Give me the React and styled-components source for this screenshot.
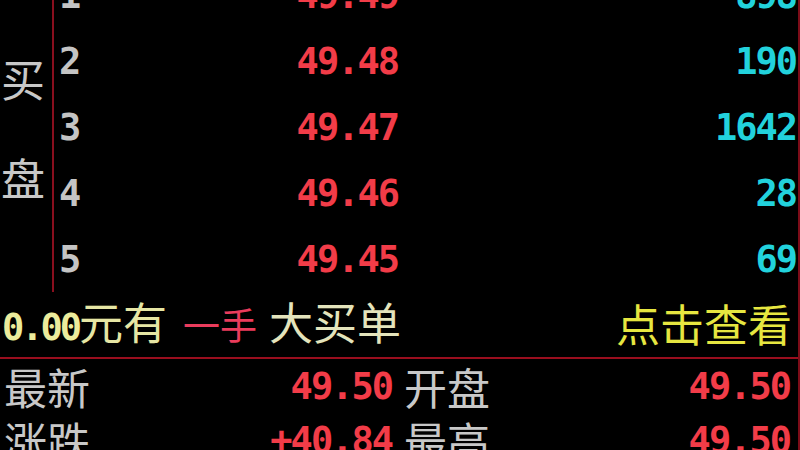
import React from 'react'
import styled, { createGlobalStyle } from 'styled-components'

const bids = [
	{ level: 1, price: '49.49', volume: '898' },
	{ level: 2, price: '49.48', volume: '190' },
	{ level: 3, price: '49.47', volume: '1642' },
	{ level: 4, price: '49.46', volume: '28' },
	{ level: 5, price: '49.45', volume: '69' },
]

const stats = [
	[
		{ label: '最新', value: '49.50' },
		{ label: '开盘', value: '49.50' },
	],
	[
		{ label: '涨跌', value: '+40.84' },
		{ label: '最高', value: '49.50' },
	],
]

const GlobalStyle = createGlobalStyle`
	html, body {
		margin: 0;
		padding: 0;
		background: #000;
	}
	* {
		box-sizing: border-box;
	}
`

const Screen = styled.div`
	width: 800px;
	height: 450px;
	overflow: hidden;
	background: #000;
	border-right: 2px solid #7c0c18;
	font-family: 'Noto Sans CJK SC', sans-serif;
	display: flex;
	flex-direction: column;
`

const Book = styled.div`
	display: flex;
	height: 330px;
	margin-top: -38px;
	flex-shrink: 0;
`

const SideLabel = styled.div`
	width: 54px;
	border-right: 2px solid #8a0f1e;
	display: flex;
	flex-direction: column;
	justify-content: center;
	align-items: flex-start;
	gap: 55px;
	padding-left: 1px;
	color: #c8c8c8;
	font-size: 44px;
	line-height: 44px;
`

const Levels = styled.div`
	flex: 1;
	display: flex;
	flex-direction: column;
`

const Level = styled.div`
	height: 66px;
	display: flex;
	align-items: center;
	font-family: 'DejaVu Sans Mono', monospace;
	font-weight: bold;
	font-size: 37px;
	letter-spacing: -2px;
`

const Index = styled.span`
	width: 40px;
	padding-left: 5px;
	color: #c4c4c4;
`

const Price = styled.span`
	width: 304px;
	text-align: right;
	color: #f23c48;
`

const Volume = styled.span`
	flex: 1;
	text-align: right;
	padding-right: 2px;
	color: #22d2dc;
`

const Banner = styled.div`
	height: 67px;
	flex-shrink: 0;
	border-bottom: 2px solid #9a0e1e;
	display: flex;
	align-items: center;
	justify-content: space-between;
	padding: 0 6px 4px 2px;
	line-height: 1;
`

const BannerText = styled.div`
	display: flex;
	align-items: baseline;
`

const Piece = styled.span`
	color: ${props => props.color};
	margin-left: ${props => props.gap || 0}px;
	font-size: ${props => props.size || 44}px;
`

const Amount = styled.span`
	color: #ecec9c;
	font-family: 'DejaVu Sans Mono', monospace;
	font-weight: bold;
	font-size: 37px;
	letter-spacing: -3px;
`

const Stats = styled.div`
	display: flex;
	flex-direction: column;
`

const StatRow = styled.div`
	display: grid;
	grid-template-columns: 400px 1fr;
	height: 54px;
	align-items: center;
`

const Stat = styled.div`
	display: flex;
	justify-content: space-between;
	align-items: center;
	padding: 0 8px 0 4px;
`

const StatLabel = styled.span`
	color: #c8c8c8;
	font-size: 43px;
	line-height: 1;
`

const StatValue = styled.span`
	color: #f23c48;
	font-family: 'DejaVu Sans Mono', monospace;
	font-weight: bold;
	font-size: 37px;
	letter-spacing: -2px;
`

const App = () => (
	<Screen>
		<GlobalStyle />
		<Book>
			<SideLabel>
				<span>买</span>
				<span>盘</span>
			</SideLabel>
			<Levels>
				{bids.map(entry => (
					<Level key={entry.level}>
						<Index>{entry.level}</Index>
						<Price>{entry.price}</Price>
						<Volume>{entry.volume}</Volume>
					</Level>
				))}
			</Levels>
		</Book>
		<Banner>
			<BannerText>
				<Amount>0.00</Amount>
				<Piece color="#e6e6a4">元有</Piece>
				<Piece color="#ea3c5c" size={37} gap={16}>一手</Piece>
				<Piece color="#e4e4bc" gap={12}>大买单</Piece>
			</BannerText>
			<Piece color="#e6e640">点击查看</Piece>
		</Banner>
		<Stats>
			{stats.map((row, i) => (
				<StatRow key={i}>
					{row.map(entry => (
						<Stat key={entry.label}>
							<StatLabel>{entry.label}</StatLabel>
							<StatValue>{entry.value}</StatValue>
						</Stat>
					))}
				</StatRow>
			))}
		</Stats>
	</Screen>
)

export default App
